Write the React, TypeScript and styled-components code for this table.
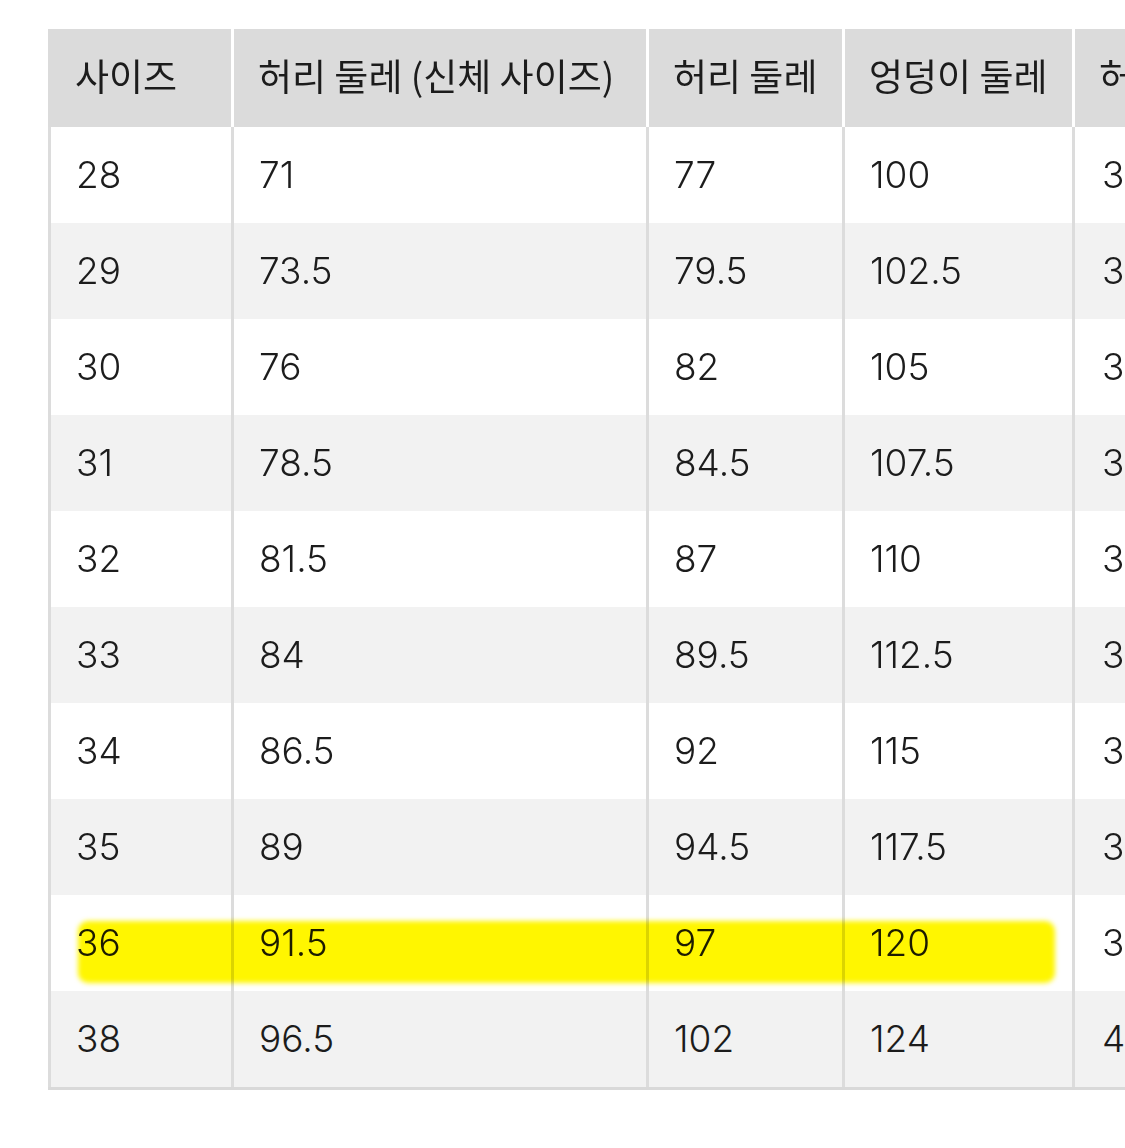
import React from "react";
import styled, { createGlobalStyle } from "styled-components";

const Global = createGlobalStyle`
  html, body { margin: 0; padding: 0; background: #ffffff; overflow: hidden; }
  body { font-family: Inter, "Noto Sans CJK KR", sans-serif; }
`;

const COLS = "183px 415px 196px 230px 260px";

const Page = styled.div`
  padding: 29px 0 0 48px;
  width: 1125px;
  height: 1148px;
  box-sizing: border-box;
`;

const Table = styled.div`
  display: flex;
  flex-direction: column;
  width: 1284px;
  border-bottom: 3px solid #d9d9d9;
`;

const Row = styled.div<{ $stripe?: boolean; $head?: boolean; $mark?: boolean }>`
  position: relative;
  display: grid;
  grid-template-columns: ${COLS};
  height: ${(p) => (p.$head ? "98px" : "96px")};
  background: ${(p) => (p.$head ? "#dbdbdb" : p.$stripe ? "#f2f2f2" : "#ffffff")};
  ${(p) =>
    p.$mark
      ? `&::after {
    content: "";
    position: absolute;
    left: 30px;
    top: 26px;
    width: 977px;
    height: 62px;
    background: #fff600;
    border-radius: 10px;
    filter: blur(2.5px);
    mix-blend-mode: multiply;
    pointer-events: none;
  }`
      : ""}
`;

const Cell = styled.div<{ $head?: boolean; $first?: boolean; $edge?: boolean }>`
  display: flex;
  align-items: center;
  padding-left: ${(p) => (p.$edge ? "27px" : p.$head ? "24px" : "25px")};
  padding-bottom: ${(p) => (p.$head ? "6px" : "2px")};
  box-sizing: border-box;
  border-left: 3px solid
    ${(p) => (p.$head ? (p.$first ? "#dbdbdb" : "#ffffff") : "#dcdcdc")};
  font-family: ${(p) =>
    p.$head ? `"Noto Sans CJK KR", Inter, sans-serif` : `Inter, "Noto Sans CJK KR", sans-serif`};
  font-size: 37px;
  font-weight: ${(p) => (p.$head ? 400 : 300)};
  color: #1c1c1c;
  white-space: nowrap;
`;

const headers = ["사이즈", "허리 둘레 (신체 사이즈)", "허리 둘레", "엉덩이 둘레", "허벅지 둘레"];

const rows: string[][] = [
  ["28", "71", "77", "100", "31"],
  ["29", "73.5", "79.5", "102.5", "32"],
  ["30", "76", "82", "105", "33"],
  ["31", "78.5", "84.5", "107.5", "34"],
  ["32", "81.5", "87", "110", "35"],
  ["33", "84", "89.5", "112.5", "36"],
  ["34", "86.5", "92", "115", "37"],
  ["35", "89", "94.5", "117.5", "38"],
  ["36", "91.5", "97", "120", "39"],
  ["38", "96.5", "102", "124", "41"],
];

export default function App() {
  return (
    <Page>
      <Global />
      <Table>
        <Row $head>
          {headers.map((h, i) => (
            <Cell key={h} $head $first={i === 0}>
              {h}
            </Cell>
          ))}
        </Row>
        {rows.map((r, i) => (
          <Row key={r[0]} $stripe={i % 2 === 1} $mark={r[0] === "36"}>
            {r.map((v, j) => (
              <Cell key={j} $edge={j === 4}>
                {v}
              </Cell>
            ))}
          </Row>
        ))}
      </Table>
    </Page>
  );
}
